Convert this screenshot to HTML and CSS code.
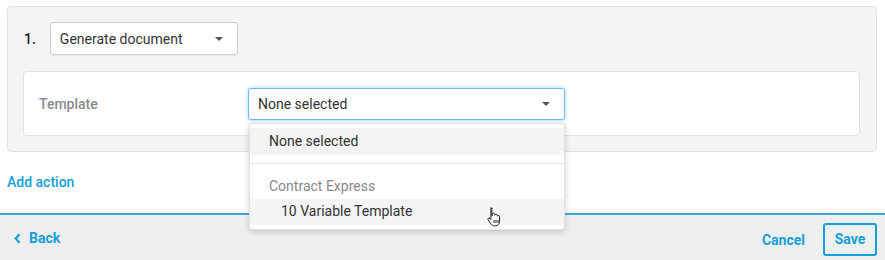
FILE: index.html
```html
<!DOCTYPE html>
<html lang="en">
<head>
  <meta charset="UTF-8">
  <title>Workflow actions</title>
  <link rel="stylesheet" href="styles.css">
</head>
<body>
  <main class="main">
    <section class="step">
      <div class="step-head">
        <span class="step-num">1.</span>
        <div class="select select-action">
          <span>Generate document</span>
          <span class="caret"></span>
        </div>
      </div>
      <div class="card">
        <label class="field-label">Template</label>
        <div class="select-wrap">
          <div class="select select-focus">
            <span>None selected</span>
            <span class="caret"></span>
          </div>
          <!-- open dropdown menu -->
          <ul class="menu">
            <li class="menu-item is-active">None selected</li>
            <li class="menu-divider"></li>
            <li class="menu-group">Contract Express</li>
            <li class="menu-item menu-sub is-hover">
              10 Variable Template
              <svg class="cursor" width="16" height="20" viewBox="0 0 16 20">
                <path d="M4.5 1.2c.9 0 1.4.6 1.4 1.4v6.1l.3-.1V7.4c0-.8.6-1.3 1.300-1.3s1.3.5 1.3 1.3v.9c.2-.6.7-.9 1.3-.9.7 0 1.2.5 1.2 1.2v.6c.2-.5.6-.7 1.1-.7.7 0 1.2.5 1.2 1.2v4.6c0 2.6-1.6 4.6-4.4 4.6H8.6c-1.6 0-2.6-.6-3.5-1.8l-3-4.2c-.4-.6-.3-1.3.2-1.7.5-.4 1.2-.3 1.7.2l.9 1V2.6c0-.8.6-1.4 1.5-1.4z" fill="#fff" stroke="#222" stroke-width="1"/>
                <path d="M8 13v3M10 13v3M12 13v3" stroke="#222" stroke-width="1"/>
              </svg>
            </li>
          </ul>
        </div>
      </div>
    </section>
    <a href="#" class="add-action">Add action</a>
  </main>

  <footer class="footer">
    <a href="#" class="back">
      <svg width="7" height="11" viewBox="0 0 7 11"><path d="M5.5 1.2L1.7 5.5l3.8 4.3" fill="none" stroke="#129fdb" stroke-width="2.2"/></svg>
      Back
    </a>
    <div class="footer-actions">
      <a href="#" class="btn-link">Cancel</a>
      <a href="#" class="btn-outline">Save</a>
    </div>
  </footer>
</body>
</html>
```

FILE: styles.css
```css
:root {
  --blue: #129fdb;
  --panel-bg: #f4f4f4;
  --border: #e2e2e2;
  --text: #333;
}
* { box-sizing: border-box; margin: 0; padding: 0; }
body { font-family: Roboto, "Liberation Sans", sans-serif; font-size: 14px; color: var(--text); background: #fff; width: 885px; height: 260px; overflow: hidden; }
a { text-decoration: none; }

.main { padding: 6px 8px 0 7px; }
.step { background: var(--panel-bg); border: 1px solid var(--border); border-radius: 4px; padding: 15px 16px 15px 15px; height: 146px; }
.step-head { display: flex; align-items: center; gap: 14px; height: 33px; }
.step-num { font-weight: 500; margin-left: 1px; color: #222; }

.select { display: flex; align-items: center; justify-content: space-between; background: #fff; border: 1px solid #cfcfcf; border-radius: 3px; padding: 0 14px 0 9px; color: #333; box-shadow: 0 1px 1px rgba(0,0,0,0.05); }
.select-action { width: 188px; height: 33px; }
.select-focus { width: 317px; height: 32px; border-color: #6cbce8; box-shadow: 0 0 4px rgba(90, 180, 230, 0.55); }
.caret { width: 0; height: 0; border-left: 4px solid transparent; border-right: 4px solid transparent; border-top: 4px solid #555; }

.card { display: flex; align-items: center; margin-top: 16px; background: #fff; border: 1px solid var(--border); border-radius: 4px; height: 65px; padding: 0 16px 0 15px; }
.field-label { width: 209px; color: #8a8a8a; font-weight: 500; }
.select-wrap { position: relative; }

.menu { position: absolute; top: 35px; left: 1px; width: 316px; list-style: none; background: #fff; border: 1px solid #e0e0e0; border-radius: 3px; box-shadow: 0 2px 6px rgba(0,0,0,0.18); padding: 4px 0; z-index: 5; }
.menu-item { height: 27px; line-height: 27px; padding: 0 19px; color: #333; position: relative; }
.menu-item.is-active { background: #f4f4f4; }
.menu-divider { height: 1px; background: #e4e4e4; margin-top: 8px; }
.menu-group { padding: 11px 19px 1px; line-height: 23px; color: #888; }
.menu-sub { padding-left: 31px; height: 26px; line-height: 25px; }
.menu-item.is-hover { background: #f4f4f4; }
.cursor { position: absolute; left: 236px; top: 8px; }

.add-action { display: block; margin-top: 20px; line-height: 20px; color: var(--blue); font-weight: 500; }

.footer { display: flex; justify-content: space-between; align-items: flex-start; margin-top: 21px; height: 47px; background: #efefef; border-top: 2px solid #36a9df; padding: 8px 8px 0 14px; }
.back { display: flex; align-items: center; gap: 8px; color: var(--blue); font-weight: 700; line-height: 20px; margin-top: 5px; }
.footer-actions { display: flex; align-items: center; gap: 18px; }
.btn-link { color: var(--blue); font-weight: 700; }
.btn-outline { display: block; color: var(--blue); font-weight: 700; border: 2px solid var(--blue); border-radius: 3px; width: 54px; height: 33px; line-height: 29px; text-align: center; }
```
